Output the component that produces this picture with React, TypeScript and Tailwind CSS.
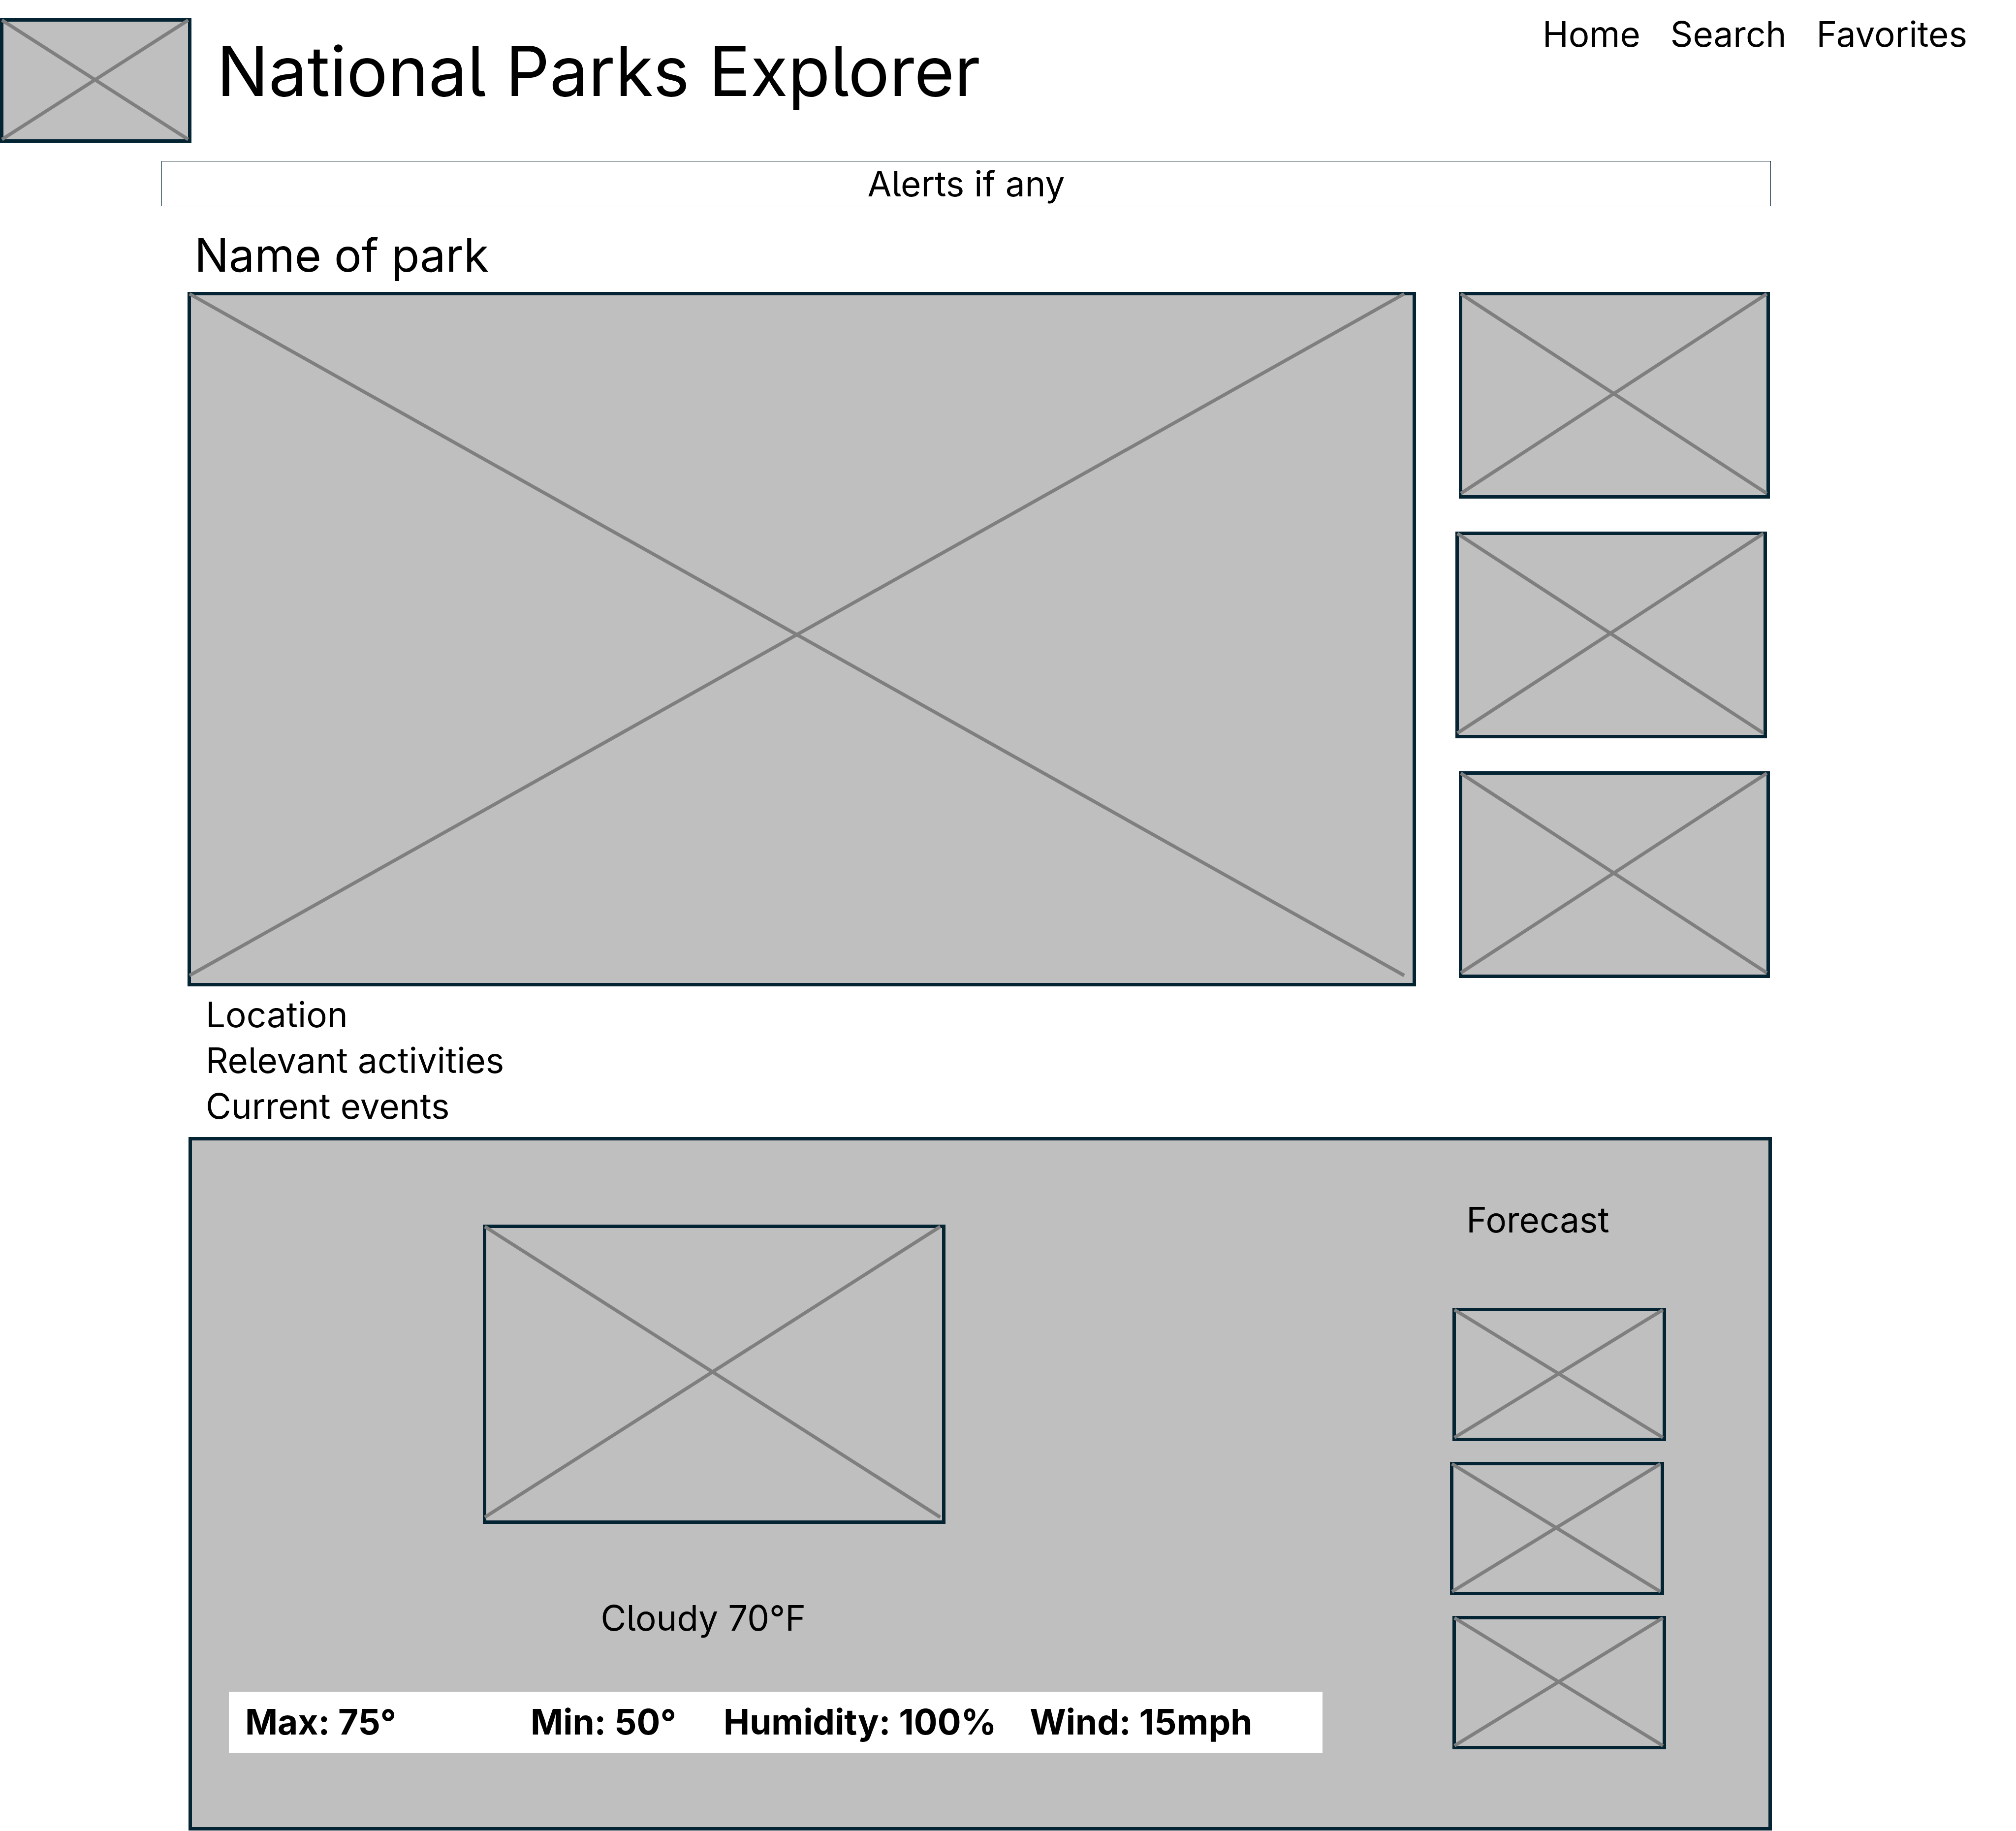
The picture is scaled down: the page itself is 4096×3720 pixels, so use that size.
type PlaceholderProps = {
  label: string;
  className: string;
  crossRight?: string;
  crossBottom?: string;
};

/* Grey framed box with two crossing lines, standing in for a picture. */
function Placeholder({ label, className, crossRight = "100%", crossBottom = "100%" }: PlaceholderProps) {
  return (
    <div className={`border-[7px] border-[#042433] bg-[#bfbfbf] ${className}`}>
      <svg
        role="img"
        aria-label={label}
        className="block h-full w-full overflow-visible"
        stroke="#7f7f7f"
        strokeWidth="7"
      >
        <line x1="-3" y1="-3" x2={crossRight} y2={crossBottom} />
        <line x1="-3" y1={crossBottom} x2={crossRight} y2="-3" />
      </svg>
    </div>
  );
}

const links = ["Home", "Search", "Favorites"];
const details = ["Location", "Relevant activities", "Current events"];
const readings = ["Max: 75°", "Min: 50°", "Humidity: 100%", "Wind: 15mph"];

export default function App() {
  return (
    <div className="w-full bg-white font-['Inter','Liberation_Sans',sans-serif] text-[71px] leading-[93px] text-black [font-feature-settings:'cv05']">
      <header className="flex items-start pt-[23px] pr-[99px]">
        <Placeholder label="Logo" className="mt-[14px] aspect-[389/253] w-[9.74%]" />
        <h1 className="mt-[36px] ml-[51px] text-[140px] leading-[170px]">National Parks Explorer</h1>
        <nav className="ml-auto flex gap-[61px]">
          {links.map((link) => (
            <a key={link} href={`#${link.toLowerCase()}`}>
              {link}
            </a>
          ))}
        </nav>
      </header>

      <p className="mt-[37px] mr-[12.15%] ml-[8%] border border-[#042433] text-center leading-[90px]">
        Alerts if any
      </p>

      <main className="mr-[12.1%] ml-[9.3%]">
        <h2 className="mt-[39px] pl-[14px] text-[93px] leading-[120px]">Name of park</h2>

        <section className="mt-[15px] grid grid-cols-[2496fr_639fr] items-start gap-[80px] pr-[4px]">
          <Placeholder
            label="Park photo"
            className="aspect-[2496/1411] w-full"
            crossRight="99.3%"
            crossBottom="98.9%"
          />
          <div className="flex flex-col gap-[67px]">
            <Placeholder label="Photo 1" className="aspect-[633/420] w-[99%] self-end" crossBottom="99.2%" />
            <Placeholder label="Photo 2" className="aspect-[633/420] w-[99%] self-start" crossBottom="99.2%" />
            <Placeholder label="Photo 3" className="aspect-[633/420] w-[99%] self-end" crossBottom="99.2%" />
          </div>
        </section>

        <ul className="mt-[11px] pl-[37px]">
          {details.map((detail) => (
            <li key={detail}>{detail}</li>
          ))}
        </ul>

        <section className="mt-[16px] ml-[2px] grid grid-cols-[2222fr_439fr] items-start gap-[259px] border-[7px] border-[#042433] bg-[#bfbfbf] pr-[208px] pb-[151px] pl-[75px]">
          <div>
            <Placeholder
              label="Current weather"
              className="mt-[171px] ml-[23.2%] aspect-[941/608] w-[42.3%]"
              crossRight="99.6%"
              crossBottom="99%"
            />
            <p className="mt-[145px] ml-[34%]">Cloudy 70°F</p>
            <ul className="mt-[103px] grid grid-cols-[580fr_392fr_622fr_595fr] bg-white pt-[15px] pb-[16px] pl-[33px] font-bold whitespace-nowrap">
              {readings.map((reading) => (
                <li key={reading}>{reading}</li>
              ))}
            </ul>
          </div>

          <div className="flex flex-col">
            <h3 className="mt-[115px] pl-[33px]">Forecast</h3>
            <div className="mt-[132px] flex flex-col gap-[42px]">
              <Placeholder label="Forecast day 1" className="aspect-[435/271] w-[99%] self-end" />
              <Placeholder label="Forecast day 2" className="aspect-[435/271] w-[99%] self-start" />
              <Placeholder label="Forecast day 3" className="aspect-[435/271] w-[99%] self-end" />
            </div>
          </div>
        </section>
      </main>
    </div>
  );
}
